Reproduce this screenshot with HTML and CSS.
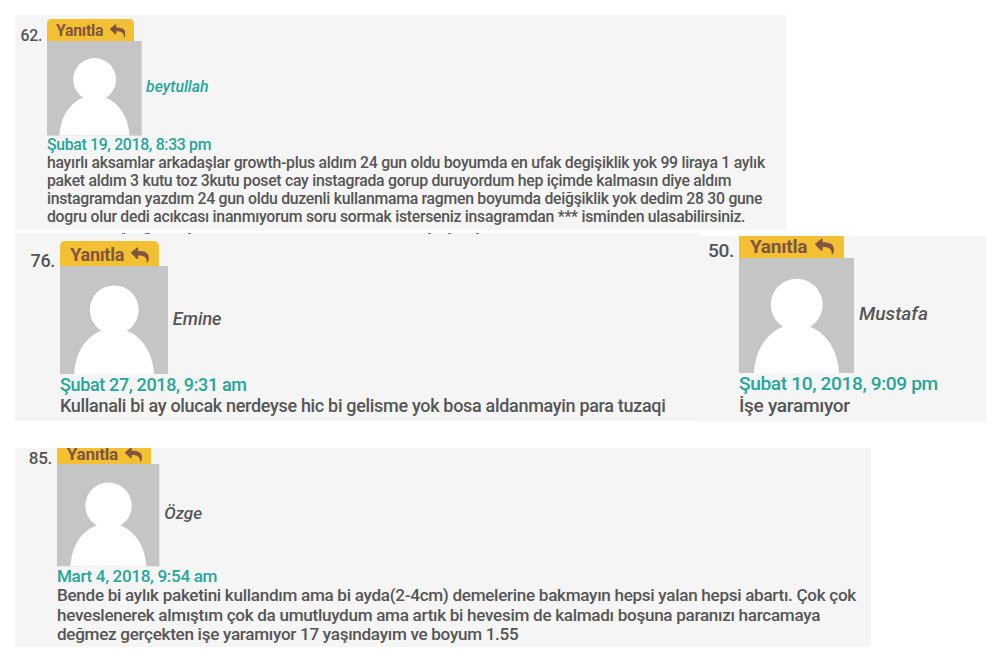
FILE: index.html
```
<!DOCTYPE html>
<html lang="tr">
<head>
  <meta charset="UTF-8">
  <meta name="viewport" content="width=device-width, initial-scale=1">
  <title>Yorumlar</title>
  <link rel="stylesheet" href="styles.css">
</head>
<body>
  <!-- Shared icons -->
  <svg class="sprite" aria-hidden="true">
    <symbol id="reply" viewBox="0 0 512 512">
      <path d="M8 180 170 45c15-12 34-3 34 15v83c190 0 300 50 304 195 1 55-20 105-42 130-12 12-26 4-22-12C468 330 370 270 204 270v82c0 18-19 27-34 15L8 215c-10-9-10-26 0-35z"/>
    </symbol>
    <symbol id="person" viewBox="0 0 96 96">
      <rect width="96" height="96" fill="#c5c5c5"/>
      <circle cx="48.200" cy="39" r="21.700" fill="#fff"/>
      <path d="M12.500 96C13.500 77 23 62 38 57h20c15 5 24.500 20 25.500 39z" fill="#fff"/>
    </symbol>
  </svg>

  <div class="comments">
    <!-- 62 -->
    <div class="comment c62">
      <span class="number">62.</span>
      <div class="content">
        <a class="reply">Yanıtla <svg><use href="#reply"/></svg></a>
        <div class="author"><svg class="avatar"><use href="#person"/></svg><cite class="link">beytullah</cite></div>
        <div class="date">Şubat 19, 2018, 8:33 pm</div>
        <p>hayırlı aksamlar arkadaşlar growth-plus aldım 24 gun oldu boyumda en ufak degişiklik yok 99 liraya 1 aylık<br>
        paket aldım 3 kutu toz 3kutu poset cay instagrada gorup duruyordum hep içimde kalmasın diye aldım<br>
        instagramdan yazdım 24 gun oldu duzenli kullanmama ragmen boyumda deiğşiklik yok dedim 28 30 gune<br>
        dogru olur dedi acıkcası inanmıyorum soru sormak isterseniz insagramdan *** isminden ulasabilirsiniz.</p>
      </div>
    </div>

    <div class="row">
      <!-- 76 -->
      <div class="comment c76">
        <span class="number">76.</span>
        <div class="content">
          <a class="reply">Yanıtla <svg><use href="#reply"/></svg></a>
          <div class="author"><svg class="avatar"><use href="#person"/></svg><cite>Emine</cite></div>
          <div class="date">Şubat 27, 2018, 9:31 am</div>
          <p>Kullanali bi ay olucak nerdeyse hic bi gelisme yok bosa aldanmayin para tuzaqi</p>
        </div>
      </div>

      <!-- 50 -->
      <div class="comment c50">
        <span class="number">50.</span>
        <div class="content">
          <a class="reply">Yanıtla <svg><use href="#reply"/></svg></a>
          <div class="author"><svg class="avatar"><use href="#person"/></svg><cite>Mustafa</cite></div>
          <div class="date">Şubat 10, 2018, 9:09 pm</div>
          <p>İşe yaramıyor</p>
        </div>
      </div>
    </div>

    <!-- 85 -->
    <div class="comment c85">
      <span class="number">85.</span>
      <div class="content">
        <a class="reply">Yanıtla <svg><use href="#reply"/></svg></a>
        <div class="author"><svg class="avatar"><use href="#person"/></svg><cite>Özge</cite></div>
        <div class="date">Mart 4, 2018, 9:54 am</div>
        <p>Bende bi aylık paketini kullandım ama bi ayda(2-4cm) demelerine bakmayın hepsi yalan hepsi abartı. Çok çok<br>
        heveslenerek almıştım çok da umutluydum ama artık bi hevesim de kalmadı boşuna paranızı harcamaya<br>
        değmez gerçekten işe yaramıyor 17 yaşındayım ve boyum 1.55</p>
      </div>
    </div>
  </div>
</body>
</html>
```
FILE: styles.css
```
* {
  box-sizing: border-box;
}
body {
  margin: 0;
  background-color: #ffffff;
  color: #555555;
  font-family: Roboto, sans-serif;
  font-weight: 500;
  overflow: hidden;
}
.sprite {
  display: none;
}
.comments {
  padding: 15px 0 0 15px;
}
.comment {
  display: flex;
  background-color: #f5f5f5;
  overflow: hidden;
}
.row {
  display: flex;
  align-items: flex-start;
  margin-top: 3px;
  margin-bottom: 26px;
}
.number {
  flex: none;
  text-align: right;
  padding-right: 5px;
  letter-spacing: -0.02em;
  white-space: nowrap;
}
.content {
  white-space: nowrap;
}
/* Reply tab */
.reply {
  display: flex;
  align-items: center;
  width: 5.48em;
  height: 1.39em;
  padding-left: 0.57em;
  padding-top: 2px;
  gap: 0.4em;
  background-color: #f4c033;
  color: #805640;
  font-weight: 700;
  letter-spacing: -0.015em;
  border-radius: 0.28em 0.28em 0 0;
}
.reply svg {
  width: 1em;
  height: 1em;
  fill: #805640;
}
/* Avatar and name */
.author {
  display: flex;
  align-items: center;
}
.author cite {
  padding-bottom: 3px;
}
.avatar {
  flex: none;
  width: 6em;
  height: 6em;
  margin-right: 0.27em;
}
.link,
.date {
  color: #26a69a;
}
.date {
  letter-spacing: -0.02em;
}
.comment p {
  margin: 0;
  letter-spacing: -0.0175em;
}
/* Individual sizes */
.c62 {
  width: 771px;
  height: 215px;
  padding-top: 4px;
  font-size: 15.8px;
  line-height: 18px;
}
.c62 .number {
  width: 32px;
  padding-top: 8px;
}
/* Bottom edge of the previous comment's last line */
.c76 {
  width: 684px;
  height: 188px;
  padding-top: 8px;
  font-size: 18px;
  line-height: 21px;
  background-image:
    linear-gradient(#777777, #777777),
    linear-gradient(#777777, #777777),
    linear-gradient(#777777, #777777),
    linear-gradient(#777777, #777777),
    linear-gradient(#777777, #777777),
    linear-gradient(#777777, #777777);
  background-repeat: no-repeat;
  background-size: 3px 1px, 5px 1px, 3px 1px, 3px 1px, 3px 1px, 3px 1px;
  background-position: 107px 0, 130px 0, 173px 0, 413px 0, 433px 0, 461px 0;
}
.c76 .number {
  width: 45px;
  padding-top: 9px;
}
.c50 {
  width: 287px;
  height: 186px;
  margin-top: 3px;
  font-size: 19.15px;
  line-height: 22px;
}
.c50 .number {
  width: 40px;
  padding-top: 4px;
}
.c50 .reply {
  height: 22px;
  padding-top: 0;
  border-radius: 0;
}
.c85 {
  width: 856px;
  height: 199px;
  font-size: 17.1px;
  line-height: 19.5px;
}
.c85 .number {
  width: 42px;
  padding-top: 1px;
}
.c85 .reply {
  height: 16px;
  padding-top: 0;
  padding-bottom: 3px;
  border-radius: 0;
}
```
